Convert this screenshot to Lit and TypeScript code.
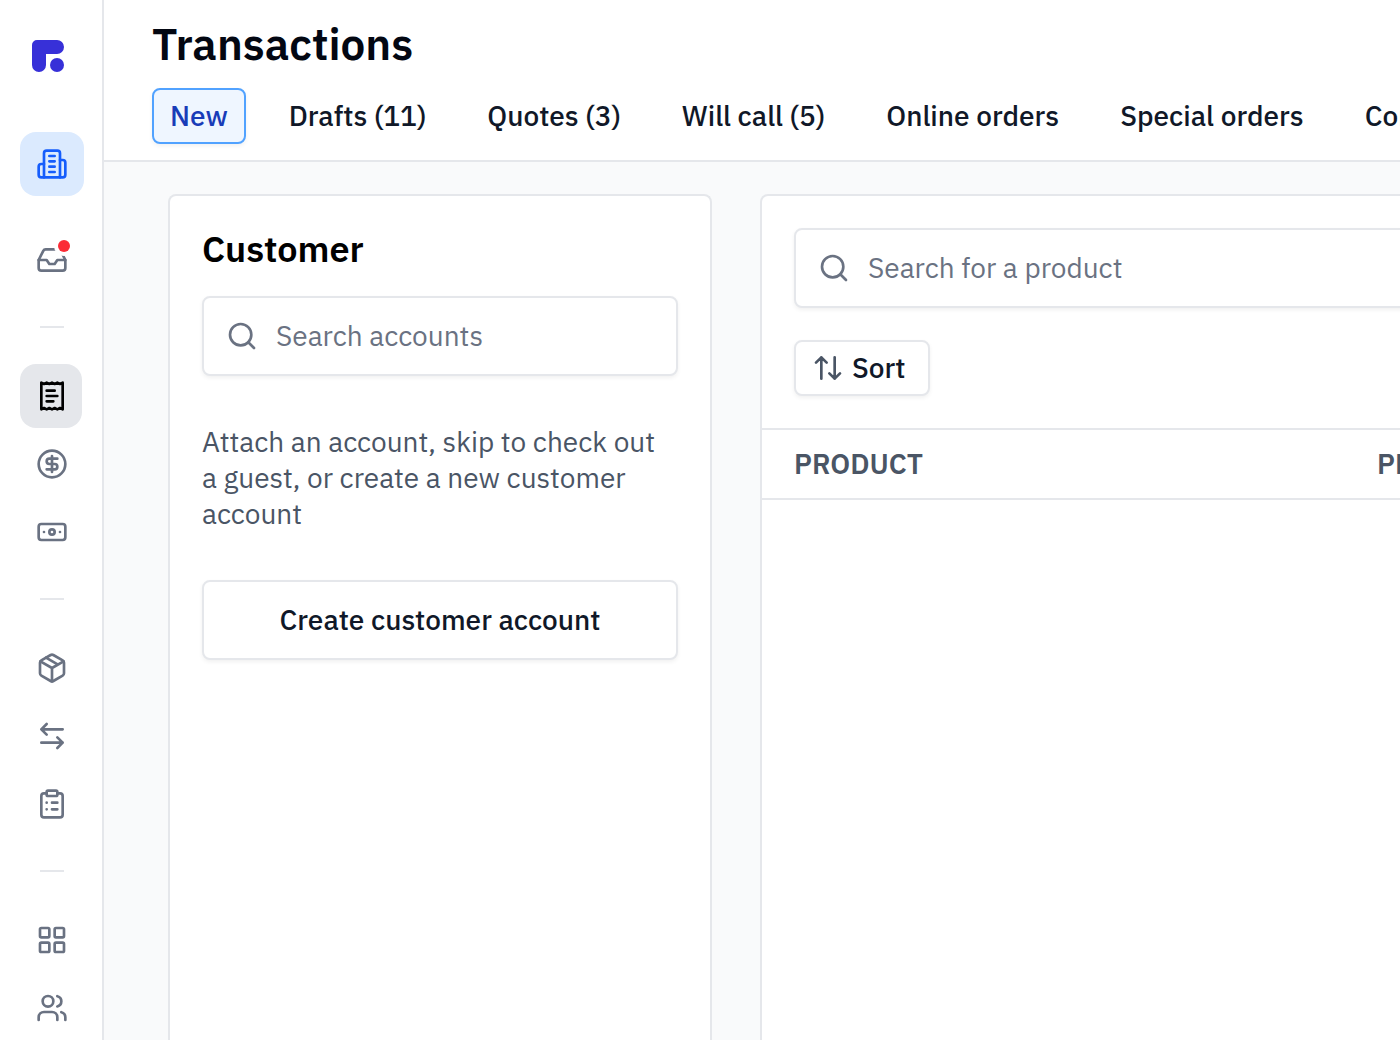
import { LitElement, html, css, svg, type SVGTemplateResult } from "lit";
import { customElement, property } from "lit/decorators.js";
import { classMap } from "lit/directives/class-map.js";

const icons: Record<string, SVGTemplateResult> = {
  building: svg`<path d="M6 22V4a2 2 0 0 1 2-2h8a2 2 0 0 1 2 2v18Z"/><path d="M6 12H4a2 2 0 0 0-2 2v6a2 2 0 0 0 2 2h2"/><path d="M18 9h2a2 2 0 0 1 2 2v9a2 2 0 0 1-2 2h-2"/><path d="M10 6h4M10 10h4M10 14h4M10 18h4"/>`,
  inbox: svg`<path d="M22 12h-6l-2 3h-4l-2-3H2"/><path d="M5.45 5.11 2 12v6a2 2 0 0 0 2 2h16a2 2 0 0 0 2-2v-6l-3.45-6.89A2 2 0 0 0 16.76 4H7.24a2 2 0 0 0-1.79 1.11z"/>`,
  receipt: svg`<path d="M4 2v20l2-1 2 1 2-1 2 1 2-1 2 1 2-1 2 1V2l-2 1-2-1-2 1-2-1-2 1-2-1-2 1Z"/><path d="M14 8H8M16 12H8M13 16H8"/>`,
  dollar: svg`<circle cx="12" cy="12" r="10"/><path d="M16 8h-6a2 2 0 1 0 0 4h4a2 2 0 1 1 0 4H8M12 18V6"/>`,
  banknote: svg`<rect x="2" y="6" width="20" height="12" rx="2"/><circle cx="12" cy="12" r="2"/><path d="M6 12h.01M18 12h.01"/>`,
  package: svg`<path d="M11 21.73a2 2 0 0 0 2 0l7-4A2 2 0 0 0 21 16V8a2 2 0 0 0-1-1.73l-7-4a2 2 0 0 0-2 0l-7 4A2 2 0 0 0 3 8v8a2 2 0 0 0 1 1.73z"/><path d="M12 22V12M3.29 7 12 12l8.71-5M7.5 4.27l9 5.15"/>`,
  transfer: svg`<path d="M8 3 4 7l4 4M4 7h16M16 21l4-4-4-4M20 17H4"/>`,
  clipboard: svg`<rect x="8" y="2" width="8" height="4" rx="1"/><path d="M16 4h2a2 2 0 0 1 2 2v14a2 2 0 0 1-2 2H6a2 2 0 0 1-2-2V6a2 2 0 0 1 2-2h2M12 11h4M12 16h4M8 11h.01M8 16h.01"/>`,
  grid: svg`<rect x="3" y="3" width="7" height="7" rx="1"/><rect x="14" y="3" width="7" height="7" rx="1"/><rect x="14" y="14" width="7" height="7" rx="1"/><rect x="3" y="14" width="7" height="7" rx="1"/>`,
  users: svg`<path d="M16 21v-2a4 4 0 0 0-4-4H6a4 4 0 0 0-4 4v2"/><circle cx="9" cy="7" r="4"/><path d="M22 21v-2a4 4 0 0 0-3-3.87M16 3.13a4 4 0 0 1 0 7.75"/>`,
  search: svg`<circle cx="11" cy="11" r="8"/><path d="m21 21-4.3-4.3"/>`,
  sort: svg`<path d="m21 16-4 4-4-4M17 20V4M3 8l4-4 4 4M7 4v16"/>`,
};

@customElement("ui-icon")
export class UiIcon extends LitElement {
  static styles = css`
    :host {
      display: block;
      flex: none;
      width: 32px;
      height: 32px;
    }
    .icon {
      display: block;
      width: 100%;
      height: 100%;
      fill: none;
      stroke: currentColor;
      stroke-width: 2;
      stroke-linecap: round;
      stroke-linejoin: round;
    }
  `;
  @property() name = "";
  render() {
    return html`<svg class="icon" viewBox="0 0 24 24" aria-hidden="true">${icons[this.name]}</svg>`;
  }
}

interface NavItem {
  icon: string;
  label: string;
  kind?: "store" | "current" | "alert";
}

const navGroups: NavItem[][] = [
  [
    { icon: "receipt", label: "Transactions", kind: "current" },
    { icon: "dollar", label: "Payments" },
    { icon: "banknote", label: "Cash" },
  ],
  [
    { icon: "package", label: "Products" },
    { icon: "transfer", label: "Transfers" },
    { icon: "clipboard", label: "Orders" },
  ],
  [
    { icon: "grid", label: "Catalog" },
    { icon: "users", label: "Customers" },
  ],
];

@customElement("side-nav")
export class SideNav extends LitElement {
  static styles = css`
    :host {
      display: block;
      box-sizing: border-box;
      width: 104px;
      padding: 40px 18px 0 20px;
      border-right: 2px solid #e5e7eb;
      background: #fff;
      overflow: hidden;
    }
    .logo {
      display: block;
      width: 32px;
      height: 32px;
      margin: 0 0 60px 12px;
    }
    .logo svg {
      display: block;
      width: 100%;
      height: 100%;
      fill: #3730d8;
    }
    .top {
      display: grid;
      gap: 32px;
    }
    .group {
      display: grid;
      gap: 4px;
    }
    .rule {
      width: 24px;
      height: 2px;
      margin: 34px 0 36px 20px;
      border: 0;
      background: #e5e7eb;
    }
    .item {
      position: relative;
      display: flex;
      box-sizing: border-box;
      width: 64px;
      height: 64px;
      padding: 16px;
      border-radius: 16px;
      color: #6a7282;
    }
    .store {
      background: #dbeafe;
      color: #155dfc;
    }
    .current {
      width: 62px;
      background: #e5e7eb;
      color: #000;
    }
    .dot {
      position: absolute;
      top: 12px;
      right: 14px;
      width: 12px;
      height: 12px;
      border-radius: 50%;
      background: #fb2c36;
      box-shadow: 0 0 0 4px #fff;
    }
  `;
  private item(it: NavItem) {
    const kind = it.kind;
    return html`<a
      class=${classMap({ item: true, store: kind === "store", current: kind === "current" })}
      href="#"
      aria-label=${it.label}
      ><ui-icon name=${it.icon}></ui-icon>${kind === "alert" ? html`<span class="dot"></span>` : ""}</a
    >`;
  }
  render() {
    return html`<nav aria-label="Main">
      <a class="logo" href="#" aria-label="Home">
        <svg viewBox="0 0 32 32">
          <path d="M5 0H25a7 7 0 0 1 0 14H14V25a7 7 0 0 1-14 0V5a5 5 0 0 1 5-5z" />
          <circle cx="25" cy="25" r="7" />
        </svg>
      </a>
      <div class="top">
        ${this.item({ icon: "building", label: "Store", kind: "store" })}
        ${this.item({ icon: "inbox", label: "Inbox", kind: "alert" })}
      </div>
      ${navGroups.map(
        (g) => html`<hr class="rule" />
          <div class="group">${g.map((it) => this.item(it))}</div>`,
      )}
    </nav>`;
  }
}

@customElement("search-field")
export class SearchField extends LitElement {
  static styles = css`
    :host {
      display: block;
    }
    .field {
      display: flex;
      align-items: center;
      gap: 16px;
      box-sizing: border-box;
      height: 80px;
      padding: 0 22px;
      border: 2px solid #e5e7eb;
      border-radius: 8px;
      background: #fff;
      box-shadow: 0 2px 4px rgb(0 0 0 / 0.06);
      color: #6a7282;
    }
    .input {
      flex: 1;
      min-width: 0;
      padding: 0 2px;
      border: 0;
      outline: 0;
      background: none;
      font: inherit;
      line-height: 36px;
      color: #101828;
    }
    .input::placeholder {
      color: #6a7282;
      opacity: 1;
    }
  `;
  @property() label = "";
  render() {
    return html`<label class="field">
      <ui-icon name="search"></ui-icon>
      <input class="input" type="text" placeholder=${this.label} aria-label=${this.label} />
    </label>`;
  }
}

const tabs = ["New", "Drafts (11)", "Quotes (3)", "Will call (5)", "Online orders", "Special orders", "Completed"];

@customElement("app-root")
export class AppRoot extends LitElement {
  static styles = css`
    :host {
      display: grid;
      grid-template-columns: auto minmax(0, 1fr);
      height: 100vh;
      overflow: hidden;
      background: #f9fafb;
      color: #101828;
      font-family: "IBM Plex Sans", "Noto Sans", sans-serif;
      font-size: 28px;
      line-height: 36px;
    }
    .page {
      display: grid;
      grid-template-rows: auto minmax(0, 1fr);
      min-width: 0;
    }
    .head {
      padding: 16px 0 16px 48px;
      border-bottom: 2px solid #e5e7eb;
      background: #fff;
      overflow: hidden;
    }
    .title {
      margin: 0 0 16px;
      font-size: 44px;
      font-weight: 600;
      line-height: 56px;
      color: #030712;
    }
    .tabs {
      display: flex;
      gap: 25px;
    }
    .tab,
    .button {
      flex: none;
      box-sizing: border-box;
      border: 2px solid #e5e7eb;
      border-radius: 8px;
      background: #fff;
      box-shadow: 0 2px 4px rgb(0 0 0 / 0.06);
      font: inherit;
      font-weight: 500;
      color: #101828;
    }
    .tab {
      height: 56px;
      padding: 0 16px;
      border-color: transparent;
      background: none;
      box-shadow: none;
      white-space: nowrap;
    }
    .selected {
      border-color: #51a2ff;
      background: #eff6ff;
      box-shadow: 0 2px 4px rgb(0 0 0 / 0.06);
      color: #193cb8;
    }
    .body {
      display: grid;
      grid-template-columns: 544px minmax(1000px, 1fr);
      gap: 48px;
      padding: 32px 64px 0;
      overflow: hidden;
    }
    .card {
      border: 2px solid #e5e7eb;
      border-bottom: 0;
      border-radius: 8px 8px 0 0;
      background: #fff;
    }
    .customer {
      padding: 32px;
    }
    .subtitle {
      margin: 0 0 26px;
      font-size: 36px;
      font-weight: 600;
      line-height: 42px;
      color: #000;
    }
    .hint {
      margin: 48px 0;
      padding-right: 12px;
      color: #4a5565;
    }
    .wide {
      width: 100%;
      height: 80px;
    }
    .tools {
      display: grid;
      justify-items: start;
      gap: 32px;
      padding: 32px;
    }
    .search {
      width: 100%;
    }
    .sort {
      display: flex;
      align-items: center;
      gap: 8px;
      height: 56px;
      padding: 0 22px 0 16px;
    }
    .sort ui-icon {
      color: #4a5565;
    }
    .products {
      width: 100%;
      border-collapse: separate;
      border-spacing: 0;
    }
    .cell {
      padding: 16px 0;
      border: solid #e5e7eb;
      border-width: 2px 0;
      font-weight: 600;
      text-align: left;
      color: #4a5565;
    }
    .name {
      width: 583px;
      padding-left: 32px;
    }
  `;
  render() {
    return html`
      <side-nav></side-nav>
      <main class="page">
        <header class="head">
          <h1 class="title">Transactions</h1>
          <div class="tabs">
            ${tabs.map(
              (t, i) => html`<button class=${classMap({ tab: true, selected: i === 0 })} type="button">${t}</button>`,
            )}
          </div>
        </header>
        <div class="body">
          <section class="card customer">
            <h2 class="subtitle">Customer</h2>
            <search-field label="Search accounts"></search-field>
            <p class="hint">Attach an account, skip to check out a guest, or create a new customer account</p>
            <button class="button wide" type="button">Create customer account</button>
          </section>
          <section class="card">
            <div class="tools">
              <search-field class="search" label="Search for a product"></search-field>
              <button class="button sort" type="button"><ui-icon name="sort"></ui-icon>Sort</button>
            </div>
            <table class="products">
              <thead>
                <tr>
                  <th class="cell name" scope="col">PRODUCT</th>
                  <th class="cell" scope="col">PRICE</th>
                </tr>
              </thead>
            </table>
          </section>
        </div>
      </main>
    `;
  }
}
